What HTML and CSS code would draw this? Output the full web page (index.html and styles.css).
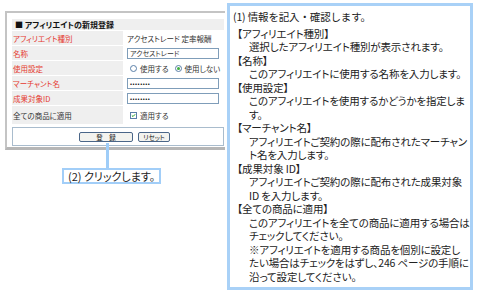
FILE: index.html
```html
<!DOCTYPE html>
<html lang="ja">
<head>
<meta charset="utf-8">
<link rel="stylesheet" href="styles.css">
</head>
<body>
<div class="page">
  <div class="left">
    <div class="frame">
      <div class="form">
        <div class="hd">■ アフィリエイトの新規登録</div>
        <div class="row"><div class="lab req">アフィリエイト種別</div><div class="val">アクセストレード 定率報酬</div></div>
        <div class="row"><div class="lab req">名称</div><div class="val"><div class="input">アクセストレード</div></div></div>
        <div class="row"><div class="lab req">使用設定</div><div class="val"><span class="radio"></span><span class="opt">使用する</span><span class="radio on"></span><span class="opt">使用しない</span></div></div>
        <div class="row"><div class="lab req">マーチャント名</div><div class="val"><div class="input pw">••••••••</div></div></div>
        <div class="row"><div class="lab req">成果対象ID</div><div class="val"><div class="input pw">••••••••</div></div></div>
        <div class="row tall"><div class="lab">全ての商品に適用</div><div class="val"><span class="check"><svg width="7" height="7" viewBox="0 0 7 7"><path d="M1.2 3.4 L2.8 5 L5.8 1.8" fill="none" stroke="#21a121" stroke-width="1.4"/></svg></span><span class="opt">適用する</span></div></div>
        <div class="btnbar"><span class="btn btn-submit">登　録</span><span class="btn btn-reset">リセット</span></div>
      </div>
    </div>
    <div class="connector"></div>
    <div class="callout">(2) クリックします。</div>
  </div>
  <div class="notes">
    <p class="lead">(1) 情報を記入・確認します。</p>
    <dl>
      <dt>【アフィリエイト種別】</dt>
      <dd>選択したアフィリエイト種別が表示されます。</dd>
      <dt>【名称】</dt>
      <dd>このアフィリエイトに使用する名称を入力します。</dd>
      <dt>【使用設定】</dt>
      <dd>このアフィリエイトを使用するかどうかを指定しま<br>す。</dd>
      <dt>【マーチャント名】</dt>
      <dd>アフィリエイトご契約の際に配布されたマーチャン<br>ト名を入力します。</dd>
      <dt>【成果対象 ID】</dt>
      <dd>アフィリエイトご契約の際に配布された成果対象<br>ID を入力します。</dd>
      <dt>【全ての商品に適用】</dt>
      <dd>このアフィリエイトを全ての商品に適用する場合は<br>チェックしてください。<br>※アフィリエイトを適用する商品を個別に設定し<br>たい場合はチェックをはずし、246 ページの手順に<br>沿って設定してください。</dd>
    </dl>
  </div>
</div>
</body>
</html>
```
FILE: styles.css
```css
* { box-sizing: border-box; margin: 0; padding: 0; }
html, body { width: 480px; height: 292px; overflow: hidden; background: #fff; }
body { font-family: "Noto Sans CJK JP", "Noto Sans", sans-serif; color: #222; }

.page { display: flex; padding-top: 3px; }

.left { position: relative; width: 227px; flex: none; }
.frame {
  margin: 8px 2px 0 5px;
  border-top: 2px solid #c4c4c4;
  border-left: 2px solid #c4c4c4;
  border-bottom: 3px solid #b6b6b6;
  padding: 6px 1px 1px 5px;
}
.form {
  display: flex; flex-direction: column; gap: 1px;
  font-size: 7.5px; font-feature-settings: "palt";
  color: #333;
}
.hd {
  height: 11px; line-height: 11px; background: #efefef;
  font-weight: bold; font-size: 8px; padding-left: 3px; color: #111;
}
.row { display: flex; gap: 1px; height: 14px; }
.row.tall { height: 18px; }
.lab {
  width: 111px; flex: none; background: #efefef;
  display: flex; align-items: center; padding-left: 1px;
}
.req { color: #e53a2f; }
.val { flex: 1; display: flex; align-items: center; padding-left: 3px; }
.input {
  width: 92px; height: 11px; border: 1px solid #7f9db9;
  font-size: 7px; line-height: 9px; padding-left: 2px; color: #333;
}
.input.pw { font-size: 6px; letter-spacing: 0.5px; color: #111; }
.radio {
  width: 7px; height: 7px; border-radius: 50%;
  border: 1px solid #5a7fa8; background: #fff; margin-left: 3px;
  display: inline-flex; align-items: center; justify-content: center;
}
.radio.on::after { content: ""; width: 3px; height: 3px; border-radius: 50%; background: #3fae3f; }
.opt { margin-left: 3px; margin-right: 3px; }
.check {
  width: 7px; height: 7px; border: 1px solid #5a7fa8; margin-left: 3px;
  display: inline-flex; align-items: center; justify-content: center; background: #fff;
}
.check svg { display: block; }
.btnbar {
  margin-top: 2px; height: 19px; border: 1px solid #a9bccd; background: #fff;
  display: flex; align-items: center; gap: 5px; padding-left: 66px;
}
.btn {
  height: 10px; border: 1px solid #4a6688; border-radius: 2px;
  background: #f3f3ef; font-size: 6.5px; line-height: 8px; text-align: center; color: #222;
}
.btn-submit { width: 54px; }
.btn-reset { width: 32px; }

.connector {
  position: absolute; left: 106px; top: 140px;
  width: 3px; height: 25px; background: #9fcdf8;
}
.callout {
  margin: 18px 0 0 62px; width: fit-content; height: 16px;
  border: 2px solid #a2cef8; padding: 0 4px;
  font-size: 11px; line-height: 12px; color: #222; font-feature-settings: "palt";
}

.notes {
  width: 246px; height: 287px; flex: none;
  border: 3px solid #a9d1f7; padding: 4px 0 0 3px;
  font-size: 10.5px; line-height: 13.5px; letter-spacing: -0.15px;
  font-feature-settings: "palt";
  white-space: nowrap; color: #222;
}
.lead { margin-bottom: 3px; font-feature-settings: normal; }
dt { padding-left: 4px; }
dd { padding-left: 16px; }
```
